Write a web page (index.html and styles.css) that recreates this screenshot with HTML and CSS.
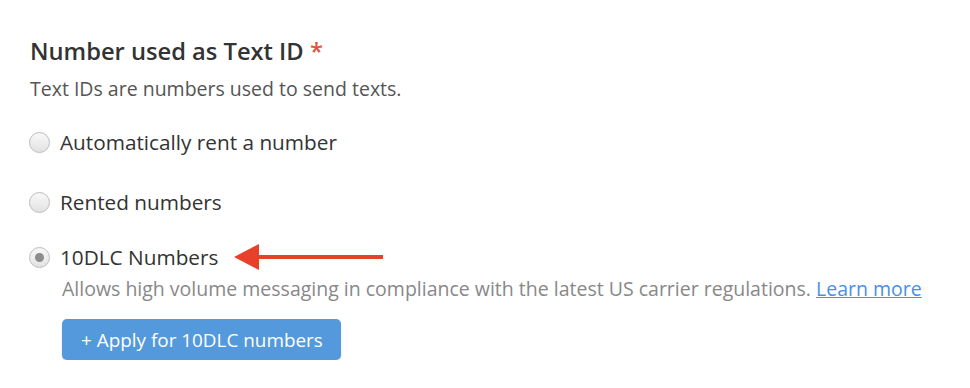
FILE: index.html
```html
<!DOCTYPE html>
<html>
<head>
<meta charset="utf-8">
<link rel="stylesheet" href="styles.css">
</head>
<body>
<div class="field">
  <h2 class="title">Number used as Text ID <span class="req">*</span></h2>
  <p class="hint">Text IDs are numbers used to send texts.</p>
  <div class="options">
    <label class="option">
      <span class="radio"></span>
      <span class="label">Automatically rent a number</span>
    </label>
    <label class="option">
      <span class="radio"></span>
      <span class="label">Rented numbers</span>
    </label>
    <div class="option-block">
      <label class="option">
        <span class="radio checked"></span>
        <span class="label">10DLC Numbers</span>
        <svg class="arrow" width="150" height="28" viewBox="0 0 150 28">
          <polygon points="0,14 25,1 25,27" fill="#e8412b"/>
          <rect x="22" y="12" width="127" height="4" fill="#e8412b"/>
        </svg>
      </label>
      <p class="desc">Allows high volume messaging in compliance with the latest US carrier regulations. <a href="#" class="link">Learn more</a></p>
      <button class="btn">+ Apply for 10DLC numbers</button>
    </div>
  </div>
</div>
</body>
</html>
```

FILE: styles.css
```css
html, body {
  margin: 0;
  padding: 0;
  background: #ffffff;
}
body {
  font-family: "Open Sans", "Noto Sans", sans-serif;
  color: #333333;
}
.field {
  padding: 36px 0 0 30px;
}
.title {
  margin: 0;
  font-size: 23.7px;
  font-weight: 600;
  line-height: 30px;
  color: #333333;
}
.req {
  color: #e0533d;
}
.hint {
  margin: 10px 0 0;
  font-size: 19.5px;
  line-height: 26px;
  color: #555555;
}
.options {
  display: flex;
  flex-direction: column;
  margin-top: 26px;
  margin-left: -1px;
}
.options > * + * {
  margin-top: 32px;
}
.options > .option-block {
  margin-top: 27px;
}
.option {
  display: flex;
  align-items: center;
  height: 28px;
}
.radio {
  flex: none;
  width: 21px;
  height: 21px;
  border-radius: 50%;
  border: 1px solid #bcbcbc;
  background: linear-gradient(#f8f8f8, #e2e2e2);
  box-sizing: border-box;
  display: flex;
  align-items: center;
  justify-content: center;
}
.radio.checked::after {
  content: "";
  width: 9px;
  height: 9px;
  border-radius: 50%;
  background: #8c8c8c;
}
.label {
  margin-left: 10px;
  font-size: 20.75px;
  line-height: 28px;
  color: #333333;
}
.arrow {
  margin-left: 16px;
}
.desc {
  margin: 5px 0 0 33px;
  font-size: 19.5px;
  line-height: 26px;
  color: #888888;
}
.link {
  color: #4a90e2;
  text-decoration: underline;
}
.btn {
  display: block;
  margin: 17px 0 0 33px;
  height: 41px;
  padding: 0 18px 0 19px;
  border: none;
  border-radius: 5px;
  background: #5499db;
  color: #ffffff;
  font-family: "Open Sans", "Noto Sans", sans-serif;
  font-size: 18.9px;
  box-shadow: 0 1px 2px rgba(0,0,0,0.15);
}
```
